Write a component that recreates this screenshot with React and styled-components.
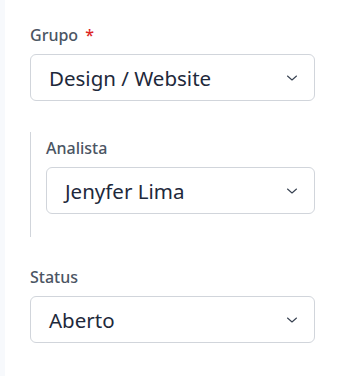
import React from "react"
import styled, { createGlobalStyle } from "styled-components"

const GlobalStyle = createGlobalStyle`
  html, body {
    margin: 0;
    padding: 0;
    background: #ffffff;
  }
  body {
    font-family: "Noto Sans", "Open Sans", sans-serif;
  }
`

const Page = styled.div`
  display: flex;
  min-height: 376px;
`

const Strip = styled.div`
  width: 5px;
  background: #f7f9fc;
  flex-shrink: 0;
`

const Form = styled.div`
  flex: 1;
  display: flex;
  flex-direction: column;
  padding: 23px 35px 0 25px;
`

const Field = styled.div`
  display: flex;
  flex-direction: column;
  gap: 7px;
`

const Label = styled.label`
  font-size: 16px;
  line-height: 24px;
  font-weight: 500;
  color: #4b5563;
`

const Required = styled.span`
  color: #dc2626;
  margin-left: 7px;
`

const SelectBox = styled.div`
  height: 47px;
  box-sizing: border-box;
  border: 1px solid #d1d5db;
  border-radius: 6px;
  display: flex;
  align-items: center;
  justify-content: space-between;
  padding: 0 16px 0 18px;
  font-size: 20.5px;
  color: #1e293b;
  background: #fff;
`

const Nested = styled.div`
  margin: 31px 0 28px 0;
  border-left: 1px solid #d1d5db;
  padding: 4px 0 23px 15px;
`

const Chevron = () => (
  <svg width="12" height="8" viewBox="0 0 12 8" fill="none">
    <path d="M1.5 2 L6 6 L10.5 2" stroke="#374151" strokeWidth="1.1" strokeLinecap="round" strokeLinejoin="round" />
  </svg>
)

function Select({ value }) {
  return (
    <SelectBox>
      <span>{value}</span>
      <Chevron />
    </SelectBox>
  )
}

export default function App() {
  return (
    <Page>
      <GlobalStyle />
      <Strip />
      <Form>
        <Field>
          <Label>Grupo<Required>*</Required></Label>
          <Select value="Design / Website" />
        </Field>
        <Nested>
          <Field>
            <Label>Analista</Label>
            <Select value="Jenyfer Lima" />
          </Field>
        </Nested>
        <Field>
          <Label>Status</Label>
          <Select value="Aberto" />
        </Field>
      </Form>
    </Page>
  )
}
